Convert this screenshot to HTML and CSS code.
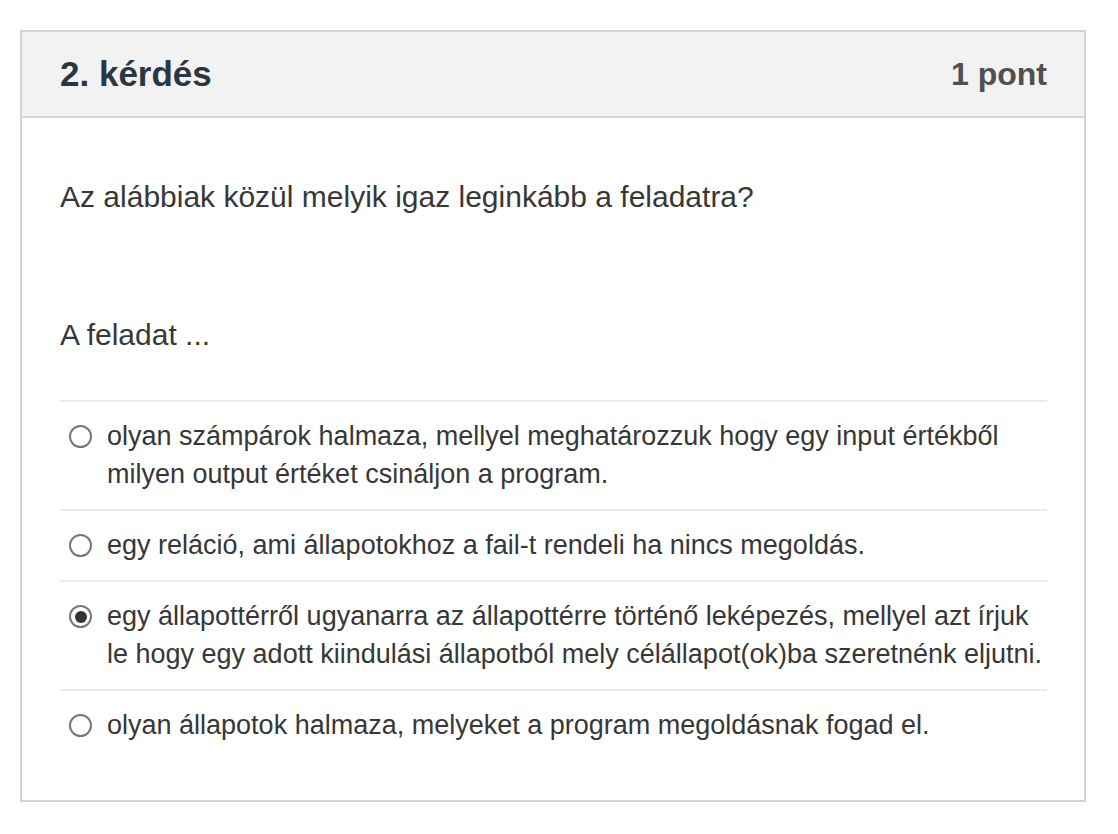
FILE: index.html
```html
<!DOCTYPE html>
<html lang="hu">
<head>
<meta charset="utf-8">
<title>2. kérdés</title>
<link rel="stylesheet" href="styles.css">
</head>
<body>
<div class="card">
  <div class="card-header">
    <h3 class="title">2. kérdés</h3>
    <span class="points">1 pont</span>
  </div>
  <div class="card-body">
    <p class="qtext">Az alábbiak közül melyik igaz leginkább a feladatra?</p>
    <p class="prompt">A feladat ...</p>
    <div class="answers">
      <label class="answer">
        <input type="radio" name="q2" class="radio">
        <span class="atext">olyan számpárok halmaza, mellyel meghatározzuk hogy egy input értékből milyen output értéket csináljon a program.</span>
      </label>
      <label class="answer">
        <input type="radio" name="q2" class="radio">
        <span class="atext">egy reláció, ami állapotokhoz a fail-t rendeli ha nincs megoldás.</span>
      </label>
      <label class="answer">
        <input type="radio" name="q2" class="radio" checked>
        <span class="atext">egy állapottérről ugyanarra az állapottérre történő leképezés, mellyel azt írjuk le hogy egy adott kiindulási állapotból mely célállapot(ok)ba szeretnénk eljutni.</span>
      </label>
      <label class="answer">
        <input type="radio" name="q2" class="radio">
        <span class="atext">olyan állapotok halmaza, melyeket a program megoldásnak fogad el.</span>
      </label>
    </div>
  </div>
</div>
</body>
</html>
```

FILE: styles.css
```css
html, body {
  margin: 0;
  padding: 0;
  background: #ffffff;
}

body {
  font-family: "Liberation Sans", Arial, sans-serif;
  color: #373737;
}

.card {
  margin: 30px 0 0 20px;
  width: 1062px;
  border: 2px solid #d4d4d4;
  background: #ffffff;
}

.card-header {
  display: flex;
  align-items: center;
  justify-content: space-between;
  height: 84px;
  padding: 0 37px 0 38px;
  background: #f2f2f2;
  border-bottom: 2px solid #d6d6d6;
}

.title {
  margin: 0;
  font-size: 35px;
  font-weight: 700;
  color: #2a3640;
}

.points {
  font-size: 32px;
  font-weight: 700;
  color: #505050;
}

.card-body {
  padding: 58px 37px 40px 38px;
}

.qtext {
  margin: 0;
  font-size: 30px;
  line-height: 42px;
}

.prompt {
  margin: 96px 0 0 0;
  font-size: 30px;
  line-height: 42px;
}

.answers {
  margin-top: 44px;
  display: flex;
  flex-direction: column;
}

.answer {
  display: flex;
  align-items: flex-start;
  gap: 15px;
  padding: 15px 0 16px 0;
  border-top: 2px solid #ebebeb;
  font-size: 27px;
  line-height: 38px;
}

.radio {
  appearance: none;
  -webkit-appearance: none;
  flex: none;
  box-sizing: border-box;
  width: 23px;
  height: 23px;
  margin: 8px 0 0 9px;
  border: 2px solid #777777;
  border-radius: 50%;
  background: #ffffff;
  display: flex;
  align-items: center;
  justify-content: center;
}

.radio:checked::after {
  content: "";
  width: 12px;
  height: 12px;
  border-radius: 50%;
  background: #333333;
}

.atext {
  flex: 1;
}
```
